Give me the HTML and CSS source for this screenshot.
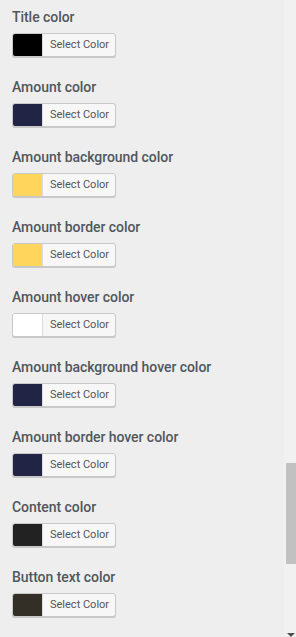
FILE: index.html
```html
<!DOCTYPE html>
<html lang="en">
  <head>
    <meta charset="UTF-8" />
    <meta name="viewport" content="width=device-width, initial-scale=1.0" />
    <title>Color settings</title>
    <link rel="stylesheet" href="styles.css">
  </head>
  <body>
    <div class="panel">
      <ul class="controls">
        <li class="control">
          <span class="control__title">Title color</span>
          <button class="picker"><span class="picker__swatch swatch--black"></span><span class="picker__label">Select Color</span></button>
        </li>
        <li class="control">
          <span class="control__title">Amount color</span>
          <button class="picker"><span class="picker__swatch swatch--navy"></span><span class="picker__label">Select Color</span></button>
        </li>
        <li class="control">
          <span class="control__title">Amount background color</span>
          <button class="picker"><span class="picker__swatch swatch--yellow"></span><span class="picker__label">Select Color</span></button>
        </li>
        <li class="control">
          <span class="control__title">Amount border color</span>
          <button class="picker"><span class="picker__swatch swatch--yellow"></span><span class="picker__label">Select Color</span></button>
        </li>
        <li class="control">
          <span class="control__title">Amount hover color</span>
          <button class="picker"><span class="picker__swatch swatch--white"></span><span class="picker__label">Select Color</span></button>
        </li>
        <li class="control">
          <span class="control__title">Amount background hover color</span>
          <button class="picker"><span class="picker__swatch swatch--navy"></span><span class="picker__label">Select Color</span></button>
        </li>
        <li class="control">
          <span class="control__title">Amount border hover color</span>
          <button class="picker"><span class="picker__swatch swatch--navy"></span><span class="picker__label">Select Color</span></button>
        </li>
        <li class="control">
          <span class="control__title">Content color</span>
          <button class="picker"><span class="picker__swatch swatch--dark"></span><span class="picker__label">Select Color</span></button>
        </li>
        <li class="control">
          <span class="control__title">Button text color</span>
          <button class="picker"><span class="picker__swatch swatch--brown"></span><span class="picker__label">Select Color</span></button>
        </li>
      </ul>
      <div class="scrollbar">
        <div class="scrollbar__track">
          <div class="scrollbar__thumb"></div>
        </div>
        <div class="scrollbar__arrow"></div>
      </div>
    </div>
  </body>
</html>
```

FILE: styles.css
```css
* {
  margin: 0;
  padding: 0;
  box-sizing: border-box;
}

html,
body {
  height: 100%;
  overflow: hidden;
}

body {
  font-family: Roboto, "Liberation Sans", sans-serif;
  background-color: #eeeeee;
  color: #50575e;
}

.panel {
  display: flex;
  height: 637px;
}

.controls {
  flex: 1;
  list-style: none;
  padding: 7px 0 0 12px;
}

.control {
  display: flex;
  flex-direction: column;
  align-items: flex-start;
  height: 70px;
}

.control__title {
  font-size: 14px;
  font-weight: 500;
  line-height: 20px;
  letter-spacing: -0.05px;
  margin-bottom: 6px;
}

.picker {
  display: flex;
  height: 24px;
  border: 1px solid #c8c8c8;
  border-radius: 3px;
  box-shadow: 0 1px 0 #c8c8c8;
  background-color: #f7f7f7;
  overflow: hidden;
  font-family: inherit;
  cursor: pointer;
}

.picker__swatch {
  width: 30px;
  height: 100%;
  border-right: 1px solid #dcdcdc;
}

.picker__label {
  padding: 0 6px 0 7px;
  font-size: 11px;
  line-height: 22px;
  color: #555;
}

.swatch--black {
  background-color: #000000;
}

.swatch--navy {
  background-color: #222445;
}

.swatch--yellow {
  background-color: #ffd55c;
}

.swatch--white {
  background-color: #ffffff;
}

.swatch--dark {
  background-color: #222222;
}

.swatch--brown {
  background-color: #332f26;
}

.scrollbar {
  width: 12px;
  display: flex;
  flex-direction: column;
  background-color: #f1f1f1;
}

.scrollbar__track {
  flex: 1;
  padding: 463px 0 0 2px;
}

.scrollbar__thumb {
  height: 101px;
  background-color: #c1c1c1;
}

.scrollbar__arrow {
  align-self: flex-end;
  margin: 0 1px 0 0;
  width: 0;
  height: 0;
  border-left: 4px solid transparent;
  border-right: 4px solid transparent;
  border-top: 4px solid #505050;
}
```
